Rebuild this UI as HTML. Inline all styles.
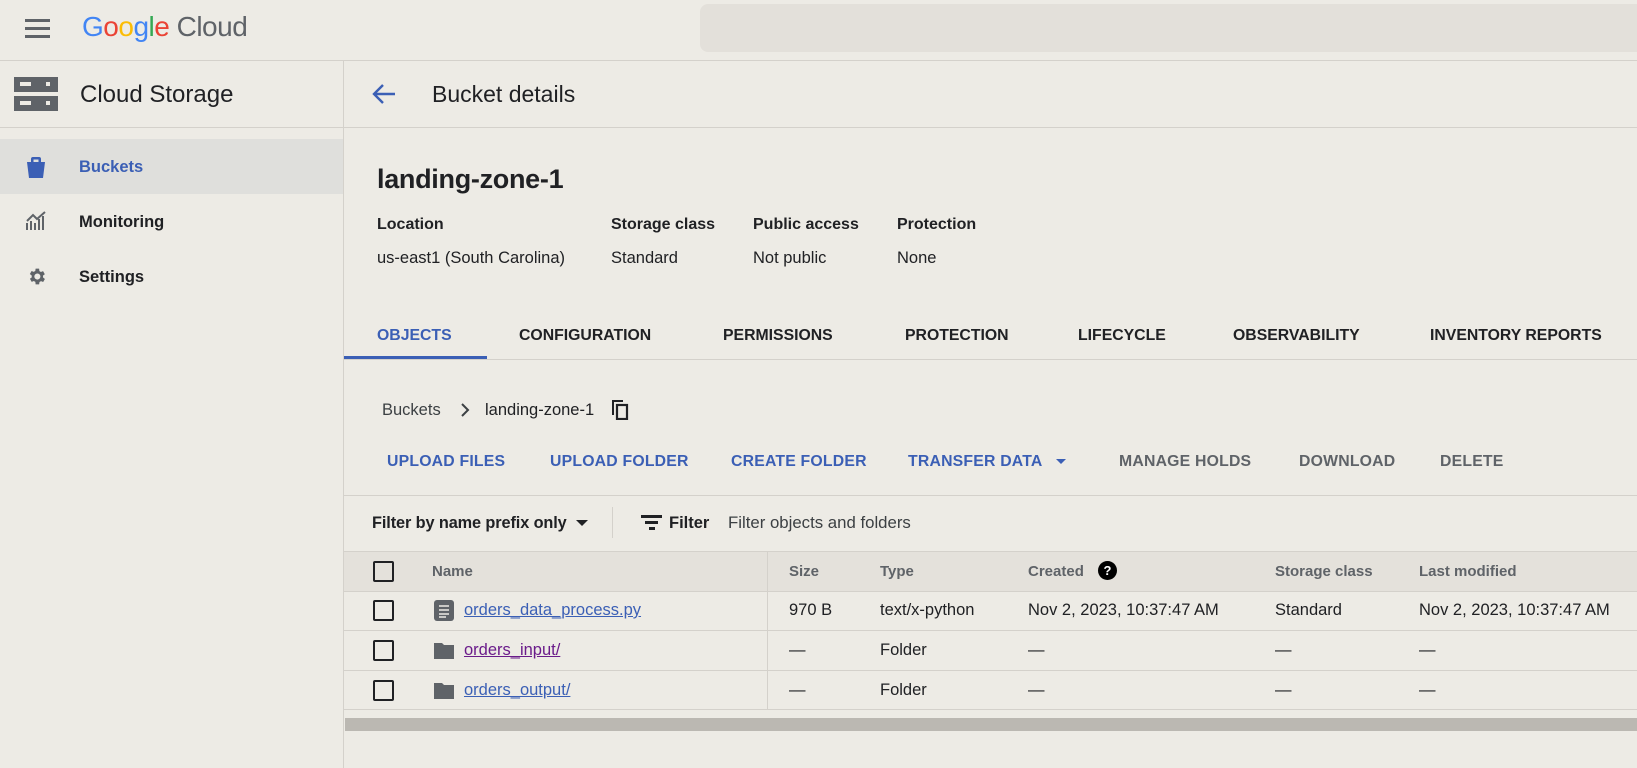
<!DOCTYPE html>
<html><head><meta charset="utf-8"><style>
*{margin:0;padding:0;box-sizing:border-box}
body{width:1637px;height:768px;background:#edebe5;font-family:"Liberation Sans",sans-serif;color:#202124;position:relative;overflow:hidden}
.a{position:absolute;white-space:nowrap;line-height:1}
.hl{position:absolute;background:#d4d1cb;height:1px}
.b{font-weight:bold}
.t{font-size:15.8px;font-weight:bold;color:#202124;letter-spacing:0}
.act{font-size:15.8px;font-weight:bold;color:#3b5fb5;letter-spacing:0.2px}
.gr{color:#5f6368}
.cb{position:absolute;width:21px;height:21px;border:2px solid #202124;border-radius:2px}
.lnk{color:#3b5fb5;text-decoration:underline;font-size:16.5px}
.c{font-size:16.5px}
</style></head><body>
<div class="a" style="left:25px;top:19px;width:25px;height:3px;background:#5f6368;box-shadow:0 8px 0 #5f6368,0 16px 0 #5f6368"></div>
<div class="a" style="left:82px;top:13px;font-size:28px;letter-spacing:-0.5px"><span style="color:#4285f4">G</span><span style="color:#ea4335">o</span><span style="color:#fbbc05">o</span><span style="color:#4285f4">g</span><span style="color:#34a853">l</span><span style="color:#ea4335">e</span><span style="color:#5f6368"> Cloud</span></div>
<div class="a" style="left:700px;top:4px;width:960px;height:48px;background:#e3e0da;border-radius:8px"></div>
<div class="hl" style="left:0;top:60px;width:1637px"></div>
<div class="a" style="left:343px;top:60px;width:1px;height:708px;background:#d4d1cb"></div>
<svg class="a" style="left:14px;top:77px" width="44" height="34" viewBox="0 0 44 34"><rect x="0" y="0" width="44" height="15" fill="#5f6368"/><rect x="0" y="19" width="44" height="15" fill="#5f6368"/><rect x="6" y="5" width="11" height="4" fill="#edebe5"/><rect x="32" y="5" width="4" height="4" fill="#edebe5"/><rect x="6" y="24" width="11" height="4" fill="#edebe5"/><rect x="32" y="24" width="4" height="4" fill="#edebe5"/></svg>
<div class="a" style="left:80px;top:83px;font-size:24px">Cloud Storage</div>
<div class="hl" style="left:0;top:127px;width:343px"></div>
<div class="a" style="left:0;top:139px;width:343px;height:55px;background:#dfdfdc"></div>
<svg class="a" style="left:25px;top:156px" width="22" height="24" viewBox="0 0 22 24"><path d="M6 6V3a2 2 0 0 1 2-2h6a2 2 0 0 1 2 2v3h4l-2 16H4L2 6z M8.5 6h5V3.5h-5z" fill="#3b5fb5"/></svg>
<div class="a b" style="left:79px;top:159px;font-size:16.5px;color:#3b5fb5">Buckets</div>
<svg class="a" style="left:26px;top:211px" width="21" height="20" viewBox="0 0 21 20"><path d="M1 19V12M5 19V10M9 19V12M13 19V8M17 19V5M1 10L7 4L11 8L19 1" stroke="#5f6368" stroke-width="2" fill="none"/></svg>
<div class="a b" style="left:79px;top:214px;font-size:16.5px">Monitoring</div>
<svg class="a" style="left:26px;top:266px" width="21" height="21" viewBox="0 0 24 24"><path fill="#5f6368" d="M19.4 13a7.5 7.5 0 0 0 0-2l2.1-1.6-2-3.5-2.5 1a7.6 7.6 0 0 0-1.7-1L15 3h-4l-.4 2.7a7.6 7.6 0 0 0-1.7 1l-2.5-1-2 3.5L6.6 11a7.5 7.5 0 0 0 0 2l-2.1 1.6 2 3.5 2.5-1a7.6 7.6 0 0 0 1.7 1L11 21h4l.4-2.7a7.6 7.6 0 0 0 1.7-1l2.5 1 2-3.5zM13 15.5a3.5 3.5 0 1 1 0-7 3.5 3.5 0 0 1 0 7z"/></svg>
<div class="a b" style="left:79px;top:269px;font-size:16.5px">Settings</div>
<svg class="a" style="left:372px;top:83px" width="24" height="22" viewBox="0 0 24 22"><path d="M23 11H3M11 2L2 11l9 9" stroke="#3b5fb5" stroke-width="2.4" fill="none"/></svg>
<div class="a" style="left:432px;top:83px;font-size:23px">Bucket details</div>
<div class="hl" style="left:344px;top:127px;width:1293px"></div>
<div class="a b" style="left:377px;top:166px;font-size:27px;letter-spacing:-0.3px">landing-zone-1</div>
<div class="a b" style="left:377px;top:217px;font-size:16px">Location</div>
<div class="a b" style="left:611px;top:217px;font-size:16px">Storage class</div>
<div class="a b" style="left:753px;top:217px;font-size:16px">Public access</div>
<div class="a b" style="left:897px;top:217px;font-size:16px">Protection</div>
<div class="a c" style="left:377px;top:250px">us-east1 (South Carolina)</div>
<div class="a c" style="left:611px;top:250px">Standard</div>
<div class="a c" style="left:753px;top:250px">Not public</div>
<div class="a c" style="left:897px;top:250px">None</div>
<div class="a t" style="left:377px;top:328px;color:#3b5fb5">OBJECTS</div>
<div class="a t" style="left:519px;top:328px">CONFIGURATION</div>
<div class="a t" style="left:723px;top:328px">PERMISSIONS</div>
<div class="a t" style="left:905px;top:328px">PROTECTION</div>
<div class="a t" style="left:1078px;top:328px">LIFECYCLE</div>
<div class="a t" style="left:1233px;top:328px">OBSERVABILITY</div>
<div class="a t" style="left:1430px;top:328px">INVENTORY REPORTS</div>
<div class="hl" style="left:344px;top:359px;width:1293px"></div>
<div class="a" style="left:344px;top:356px;width:143px;height:3px;background:#3b5fb5"></div>
<div class="a" style="left:382px;top:402px;font-size:16.5px;color:#3c4043">Buckets</div>
<svg class="a" style="left:460px;top:403px" width="10" height="14" viewBox="0 0 10 14"><path d="M2 1l6 6-6 6" stroke="#3c4043" stroke-width="2" fill="none"/></svg>
<div class="a" style="left:485px;top:402px;font-size:16.5px">landing-zone-1</div>
<svg class="a" style="left:612px;top:400px" width="17" height="20" viewBox="0 0 17 20"><path d="M1 15V1h10" stroke="#202124" stroke-width="2" fill="none"/><rect x="5" y="5" width="10" height="14" stroke="#202124" stroke-width="2.2" fill="none"/></svg>
<div class="a act" style="left:387px;top:454px">UPLOAD FILES</div>
<div class="a act" style="left:550px;top:454px">UPLOAD FOLDER</div>
<div class="a act" style="left:731px;top:454px">CREATE FOLDER</div>
<div class="a act" style="left:908px;top:454px">TRANSFER DATA</div>
<div class="a" style="left:1056px;top:459px;border-left:5px solid transparent;border-right:5px solid transparent;border-top:5px solid #3b5fb5"></div>
<div class="a act gr" style="left:1119px;top:454px">MANAGE HOLDS</div>
<div class="a act gr" style="left:1299px;top:454px">DOWNLOAD</div>
<div class="a act gr" style="left:1440px;top:454px">DELETE</div>
<div class="hl" style="left:344px;top:495px;width:1293px"></div>
<div class="a b" style="left:372px;top:515px;font-size:16.3px;letter-spacing:-0.1px">Filter by name prefix only</div>
<div class="a" style="left:576px;top:520px;border-left:6px solid transparent;border-right:6px solid transparent;border-top:6px solid #202124"></div>
<div class="a" style="left:612px;top:507px;width:1px;height:31px;background:#d4d1cb"></div>
<div class="a" style="left:641px;top:515px;width:21px;height:2.5px;background:#202124"></div>
<div class="a" style="left:645px;top:521px;width:13px;height:2.5px;background:#202124"></div>
<div class="a" style="left:649px;top:527px;width:6px;height:2.5px;background:#202124"></div>
<div class="a b" style="left:669px;top:515px;font-size:16.5px">Filter</div>
<div class="a" style="left:728px;top:515px;font-size:16.8px;color:#3c4043">Filter objects and folders</div>
<div class="a" style="left:344px;top:551px;width:1293px;height:40px;background:#e4e1db;border-top:1px solid #d4d1cb"></div>
<div class="hl" style="left:344px;top:591px;width:1293px"></div>
<div class="hl" style="left:344px;top:630px;width:1293px"></div>
<div class="hl" style="left:344px;top:670px;width:1293px"></div>
<div class="hl" style="left:344px;top:709px;width:1293px"></div>
<div class="a" style="left:767px;top:551px;width:1px;height:158px;background:#d4d1cb"></div>
<div class="cb" style="left:373px;top:561px"></div>
<div class="cb" style="left:373px;top:600px"></div>
<div class="cb" style="left:373px;top:640px"></div>
<div class="cb" style="left:373px;top:680px"></div>
<div class="a b gr" style="left:432px;top:564px;font-size:15px">Name</div>
<div class="a b gr" style="left:789px;top:564px;font-size:15px">Size</div>
<div class="a b gr" style="left:880px;top:564px;font-size:15px">Type</div>
<div class="a b gr" style="left:1028px;top:564px;font-size:15px">Created</div>
<div class="a" style="left:1098px;top:561px;width:19px;height:19px;border-radius:50%;background:#000;color:#fff;font-size:13px;font-weight:bold;text-align:center;line-height:19px">?</div>
<div class="a b gr" style="left:1275px;top:564px;font-size:15px">Storage class</div>
<div class="a b gr" style="left:1419px;top:564px;font-size:15px">Last modified</div>
<svg class="a" style="left:434px;top:600px" width="20" height="21" viewBox="0 0 20 21"><rect width="20" height="21" rx="3" fill="#5f6368"/><path d="M5 6h10M5 10h10M5 14h10M5 17h7" stroke="#edebe5" stroke-width="1.6"/></svg>
<div class="a lnk" style="left:464px;top:602px">orders_data_process.py</div>
<div class="a c" style="left:789px;top:602px">970 B</div>
<div class="a c" style="left:880px;top:602px">text/x-python</div>
<div class="a c" style="left:1028px;top:602px">Nov 2, 2023, 10:37:47 AM</div>
<div class="a c" style="left:1275px;top:602px">Standard</div>
<div class="a c" style="left:1419px;top:602px">Nov 2, 2023, 10:37:47 AM</div>
<svg class="a" style="left:434px;top:642px" width="20" height="17" viewBox="0 0 20 17"><path d="M0 1h8l2 2h10v14H0z" fill="#5f6368"/></svg>
<div class="a lnk" style="left:464px;top:642px;color:#6a1b8a">orders_input/</div>
<div class="a c" style="left:789px;top:642px">—</div>
<div class="a c" style="left:880px;top:642px">Folder</div>
<div class="a c" style="left:1028px;top:642px">—</div>
<div class="a c" style="left:1275px;top:642px">—</div>
<div class="a c" style="left:1419px;top:642px">—</div>
<svg class="a" style="left:434px;top:682px" width="20" height="17" viewBox="0 0 20 17"><path d="M0 1h8l2 2h10v14H0z" fill="#5f6368"/></svg>
<div class="a lnk" style="left:464px;top:682px">orders_output/</div>
<div class="a c" style="left:789px;top:682px">—</div>
<div class="a c" style="left:880px;top:682px">Folder</div>
<div class="a c" style="left:1028px;top:682px">—</div>
<div class="a c" style="left:1275px;top:682px">—</div>
<div class="a c" style="left:1419px;top:682px">—</div>
<div class="a" style="left:345px;top:718px;width:1292px;height:13px;background:#bbb8b2"></div>
</body></html>
